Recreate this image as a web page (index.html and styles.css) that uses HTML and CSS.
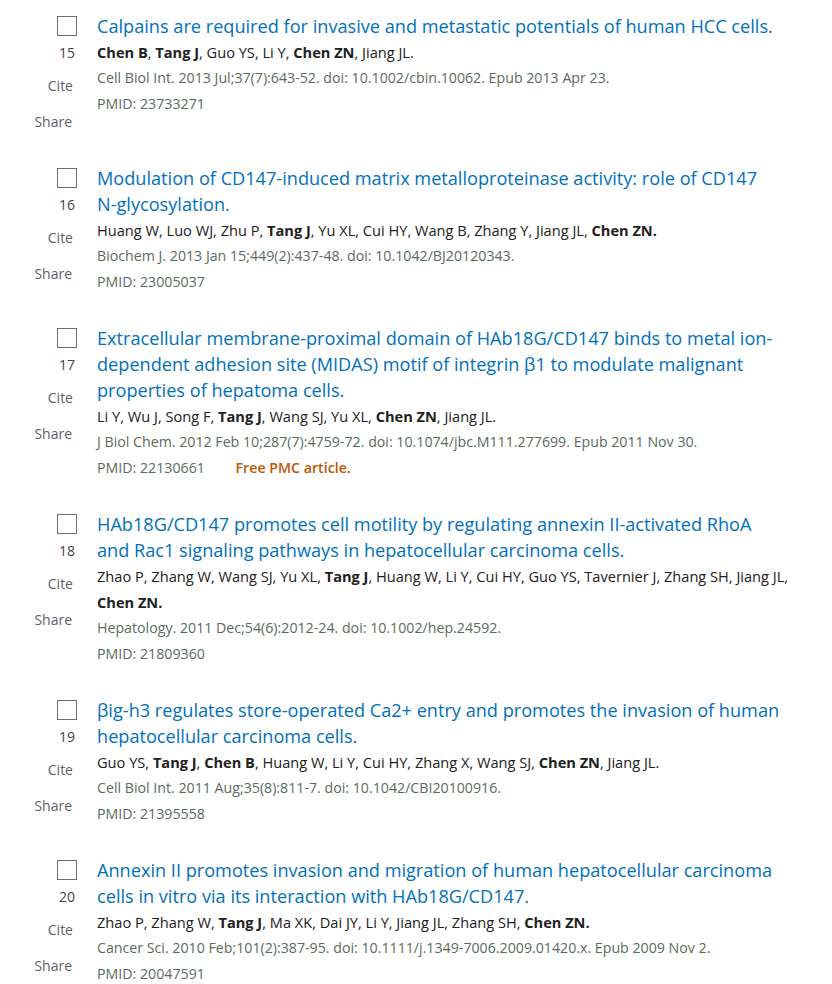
FILE: index.html
```html
<!DOCTYPE html>
<html lang="en">
<head>
<meta charset="utf-8">
<title>Search results</title>
<link rel="stylesheet" href="styles.css">
</head>
<body>
<div class="results">

  <article class="docsum">
    <div class="actions">
      <span class="checkbox"></span>
      <span class="num">15</span>
      <span class="btn cite">Cite</span>
      <span class="btn share">Share</span>
    </div>
    <div class="content">
      <a class="title">Calpains are required for invasive and metastatic potentials of human HCC cells.</a>
      <div class="authors"><b>Chen B</b>, <b>Tang J</b>, Guo YS, Li Y, <b>Chen ZN</b>, Jiang JL.</div>
      <div class="journal">Cell Biol Int. 2013 Jul;37(7):643-52. doi: 10.1002/cbin.10062. Epub 2013 Apr 23.</div>
      <div class="pmid">PMID: 23733271</div>
    </div>
  </article>

  <article class="docsum">
    <div class="actions">
      <span class="checkbox"></span>
      <span class="num">16</span>
      <span class="btn cite">Cite</span>
      <span class="btn share">Share</span>
    </div>
    <div class="content">
      <a class="title">Modulation of CD147-induced matrix metalloproteinase activity: role of CD147 <span class="nw">N-glycosylation.</span></a>
      <div class="authors">Huang W, Luo WJ, Zhu P, <b>Tang J</b>, Yu XL, Cui HY, Wang B, Zhang Y, Jiang JL, <b>Chen ZN.</b></div>
      <div class="journal">Biochem J. 2013 Jan 15;449(2):437-48. doi: 10.1042/BJ20120343.</div>
      <div class="pmid">PMID: 23005037</div>
    </div>
  </article>

  <article class="docsum">
    <div class="actions">
      <span class="checkbox"></span>
      <span class="num">17</span>
      <span class="btn cite">Cite</span>
      <span class="btn share">Share</span>
    </div>
    <div class="content">
      <a class="title">Extracellular membrane-proximal domain of HAb18G/CD147 binds to metal ion-dependent adhesion site (MIDAS) motif of integrin β1 to modulate malignant properties of hepatoma cells.</a>
      <div class="authors">Li Y, Wu J, Song F, <b>Tang J</b>, Wang SJ, Yu XL, <b>Chen ZN</b>, Jiang JL.</div>
      <div class="journal">J Biol Chem. 2012 Feb 10;287(7):4759-72. doi: 10.1074/jbc.M111.277699. Epub 2011 Nov 30.</div>
      <div class="pmid">PMID: 22130661 <span class="free">Free PMC article.</span></div>
    </div>
  </article>

  <article class="docsum">
    <div class="actions">
      <span class="checkbox"></span>
      <span class="num">18</span>
      <span class="btn cite">Cite</span>
      <span class="btn share">Share</span>
    </div>
    <div class="content">
      <a class="title">HAb18G/CD147 promotes cell motility by regulating annexin II-activated RhoA and Rac1 signaling pathways in hepatocellular carcinoma cells.</a>
      <div class="authors">Zhao P, Zhang W, Wang SJ, Yu XL, <b>Tang J</b>, Huang W, Li Y, Cui HY, Guo YS, Tavernier J, Zhang SH, Jiang JL, <b>Chen ZN.</b></div>
      <div class="journal">Hepatology. 2011 Dec;54(6):2012-24. doi: 10.1002/hep.24592.</div>
      <div class="pmid">PMID: 21809360</div>
    </div>
  </article>

  <article class="docsum">
    <div class="actions">
      <span class="checkbox"></span>
      <span class="num">19</span>
      <span class="btn cite">Cite</span>
      <span class="btn share">Share</span>
    </div>
    <div class="content">
      <a class="title">βig-h3 regulates store-operated Ca2+ entry and promotes the invasion of human hepatocellular carcinoma cells.</a>
      <div class="authors">Guo YS, <b>Tang J</b>, <b>Chen B</b>, Huang W, Li Y, Cui HY, Zhang X, Wang SJ, <b>Chen ZN</b>, Jiang JL.</div>
      <div class="journal">Cell Biol Int. 2011 Aug;35(8):811-7. doi: 10.1042/CBI20100916.</div>
      <div class="pmid">PMID: 21395558</div>
    </div>
  </article>

  <article class="docsum">
    <div class="actions">
      <span class="checkbox"></span>
      <span class="num">20</span>
      <span class="btn cite">Cite</span>
      <span class="btn share">Share</span>
    </div>
    <div class="content">
      <a class="title">Annexin II promotes invasion and migration of human hepatocellular carcinoma cells in vitro via its interaction with HAb18G/CD147.</a>
      <div class="authors">Zhao P, Zhang W, <b>Tang J</b>, Ma XK, Dai JY, Li Y, Jiang JL, Zhang SH, <b>Chen ZN.</b></div>
      <div class="journal">Cancer Sci. 2010 Feb;101(2):387-95. doi: 10.1111/j.1349-7006.2009.01420.x. Epub 2009 Nov 2.</div>
      <div class="pmid">PMID: 20047591</div>
    </div>
  </article>

</div>
</body>
</html>
```

FILE: styles.css
```css
html, body {
  margin: 0;
  padding: 0;
  background: #ffffff;
}

body {
  font-family: "Open Sans", "Noto Sans", sans-serif;
  color: #212121;
}

.results {
  padding: 13px 0 0 0;
}

.docsum {
  display: flex;
  gap: 20px;
  margin-bottom: 31px;
}

.actions {
  width: 77px;
  display: flex;
  flex-direction: column;
  align-items: flex-end;
  flex-shrink: 0;
  font-size: 14px;
  color: #5b616b;
}

.checkbox {
  box-sizing: border-box;
  width: 20px;
  height: 20px;
  border: 1.5px solid #6e6e6e;
  background: #fff;
  margin: 3px 0 3px 0;
}

.num {
  line-height: 27px;
  padding-right: 2px;
  color: #444;
}

.btn {
  line-height: 25px;
  padding-right: 4px;
  color: #5b616b;
}

.cite { margin-top: 7px; }
.share { margin-top: 11px; padding-right: 5px; }

.content {
  width: 696px;
  flex-shrink: 0;
}

.title {
  display: block;
  padding-right: 10px;
  font-size: 18.15px;
  line-height: 26px;
  color: #0071bc;
  text-decoration: none;
}

.nw { white-space: nowrap; }

.authors {
  font-size: 14.6px;
  line-height: 26px;
  color: #212121;
}

.authors b { font-weight: 700; }

.journal,
.pmid {
  font-size: 14.2px;
  line-height: 25.5px;
  color: #5a6b5c;
}

.free {
  margin-left: 27px;
  color: #c05600;
  font-weight: 600;
}
```
